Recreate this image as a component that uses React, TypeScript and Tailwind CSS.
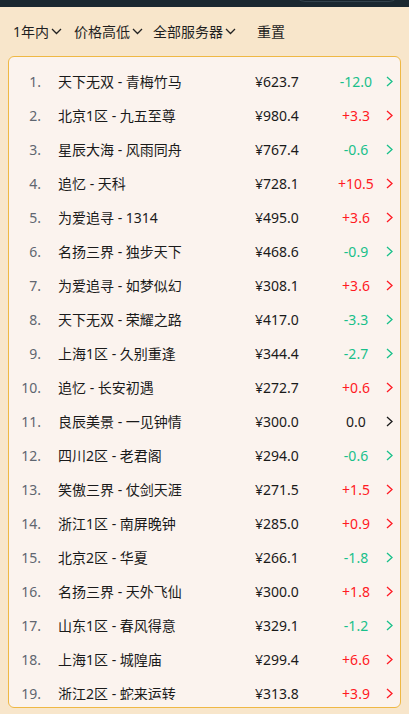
import React from "react";

type Row = [string, string, string, string];

const rows: Row[] = [
  ["1.", "天下无双 - 青梅竹马", "¥623.7", "-12.0"],
  ["2.", "北京1区 - 九五至尊", "¥980.4", "+3.3"],
  ["3.", "星辰大海 - 风雨同舟", "¥767.4", "-0.6"],
  ["4.", "追忆 - 天科", "¥728.1", "+10.5"],
  ["5.", "为爱追寻 - 1314", "¥495.0", "+3.6"],
  ["6.", "名扬三界 - 独步天下", "¥468.6", "-0.9"],
  ["7.", "为爱追寻 - 如梦似幻", "¥308.1", "+3.6"],
  ["8.", "天下无双 - 荣耀之路", "¥417.0", "-3.3"],
  ["9.", "上海1区 - 久别重逢", "¥344.4", "-2.7"],
  ["10.", "追忆 - 长安初遇", "¥272.7", "+0.6"],
  ["11.", "良辰美景 - 一见钟情", "¥300.0", "0.0"],
  ["12.", "四川2区 - 老君阁", "¥294.0", "-0.6"],
  ["13.", "笑傲三界 - 仗剑天涯", "¥271.5", "+1.5"],
  ["14.", "浙江1区 - 南屏晚钟", "¥285.0", "+0.9"],
  ["15.", "北京2区 - 华夏", "¥266.1", "-1.8"],
  ["16.", "名扬三界 - 天外飞仙", "¥300.0", "+1.8"],
  ["17.", "山东1区 - 春风得意", "¥329.1", "-1.2"],
  ["18.", "上海1区 - 城隍庙", "¥299.4", "+6.6"],
  ["19.", "浙江2区 - 蛇来运转", "¥313.8", "+3.9"],
];

const font = { fontFamily: '"Noto Sans", "Noto Sans CJK SC", sans-serif' };

function Down() {
  return (
    <svg width="11" height="7" viewBox="0 0 11 7" className="ml-[2px]">
      <polyline points="1,1 5.5,5.5 10,1" fill="none" stroke="#222" strokeWidth="1.3" />
    </svg>
  );
}

function Right({ color }: { color: string }) {
  return (
    <svg width="7" height="11" viewBox="0 0 7 11">
      <polyline points="1,1 6,5.5 1,10" fill="none" stroke={color} strokeWidth="1.3" />
    </svg>
  );
}

export default function App() {
  return (
    <div className="w-[409px] h-[714px] overflow-hidden bg-[#f8e6cb] text-[14px]" style={font}>
      <div className="h-[7px] bg-[#1b2830] flex justify-end overflow-hidden">
        <div className="mr-[9px] mt-[-20px] h-[22px] w-[106px] rounded-full border border-[#33424c] bg-[#18242c]" />
      </div>
      <div className="h-[49px] flex items-center pl-[13px] text-[#1f1f1f]">
        <div className="flex items-center">1年内<Down /></div>
        <div className="flex items-center ml-[12px]">价格高低<Down /></div>
        <div className="flex items-center ml-[10px]">全部服务器<Down /></div>
        <div className="ml-[21px]">重置</div>
      </div>
      <div className="mx-[8px] h-[652px] rounded-[6px] border border-[#efb844] bg-[#fbf3ee] py-[7px]">
        <div className="h-full overflow-hidden">
          {rows.map(([n, name, price, ch]) => {
            const color = ch.startsWith("+") ? "#ff1a24" : ch.startsWith("-") ? "#19c08a" : "#1a1a1a";
            return (
              <div key={n} className="flex items-center h-[34px]">
                <span className="w-[32px] text-right text-[#5f6670]">{n}</span>
                <span className="w-[214px] pl-[17px] text-[#1a1a1a]">{name}</span>
                <span className="w-[76px] text-[#1a1a1a]">{price}</span>
                <span className="w-[50px] text-center" style={{ color }}>{ch}</span>
                <span className="ml-[5px] flex items-center">
                  <Right color={color} />
                </span>
              </div>
            );
          })}
        </div>
      </div>
    </div>
  );
}
